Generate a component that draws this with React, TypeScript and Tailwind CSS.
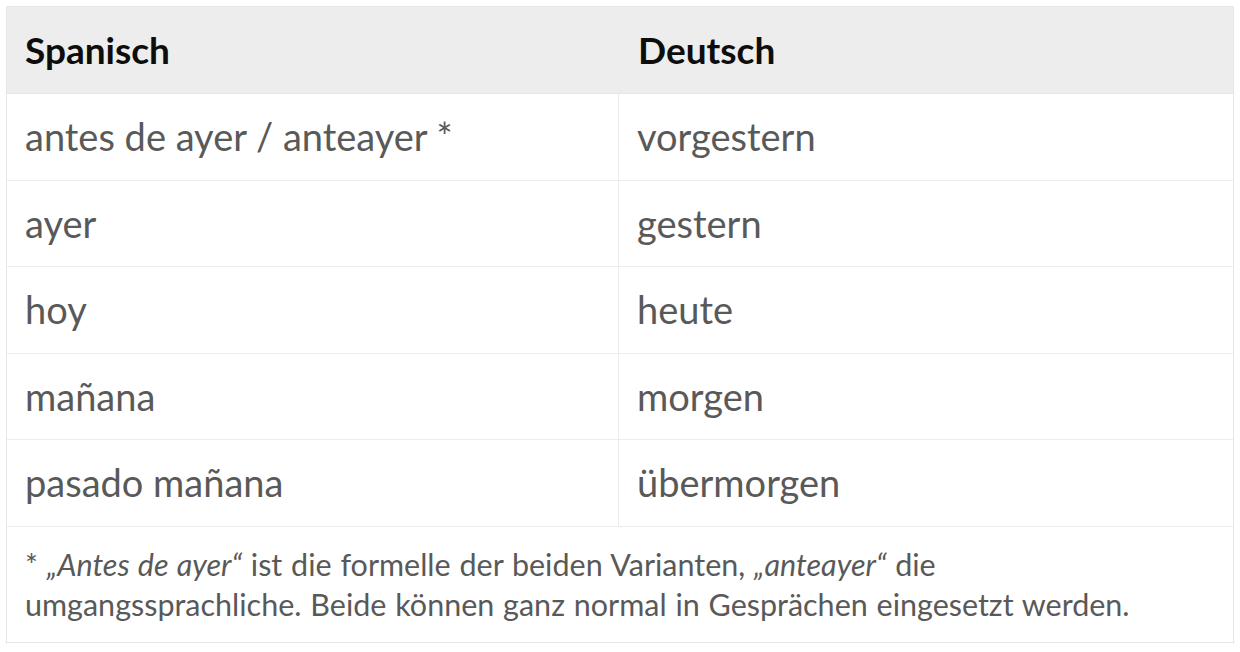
const rows: [string, string][] = [
  ["antes de ayer / anteayer *", "vorgestern"],
  ["ayer", "gestern"],
  ["hoy", "heute"],
  ["mañana", "morgen"],
  ["pasado mañana", "übermorgen"],
];

export default function App() {
  return (
    <div className="w-[1240px] h-[652px] bg-white pt-[6px] pl-[6px] font-['Lato',sans-serif]">
      <div className="w-[1228px] h-[637px] border border-[#e6e6e6] flex flex-col">
        {/* head */}
        <div className="h-[87px] bg-[#ededed] grid grid-cols-[612px_1fr] border-b border-[#e6e6e6]">
          <div className="flex items-center pl-[18px] text-[37px] font-bold text-[#0d0d0d]">
            Spanisch
          </div>
          <div className="flex items-center pl-[19px] text-[37px] font-bold text-[#0d0d0d]">
            Deutsch
          </div>
        </div>

        {rows.map(([es, de]) => (
          <div
            key={es}
            className="h-[86.5px] grid grid-cols-[612px_1fr] border-b border-[#ececec] text-[38px] text-[#595959]"
          >
            <div className="flex items-center pl-[18px] border-r border-[#ececec]">{es}</div>
            <div className="flex items-center pl-[18px]">{de}</div>
          </div>
        ))}

        {/* footnote */}
        <div className="flex-1 pl-[18px] pt-[17px] text-[30.5px] leading-[40px] text-[#595959] [word-spacing:1px]">
          * <i>„Antes de ayer“</i> ist die formelle der beiden Varianten, <i>„anteayer“</i> die
          <br />
          umgangssprachliche. Beide können ganz normal in Gesprächen eingesetzt werden.
        </div>
      </div>
    </div>
  );
}
